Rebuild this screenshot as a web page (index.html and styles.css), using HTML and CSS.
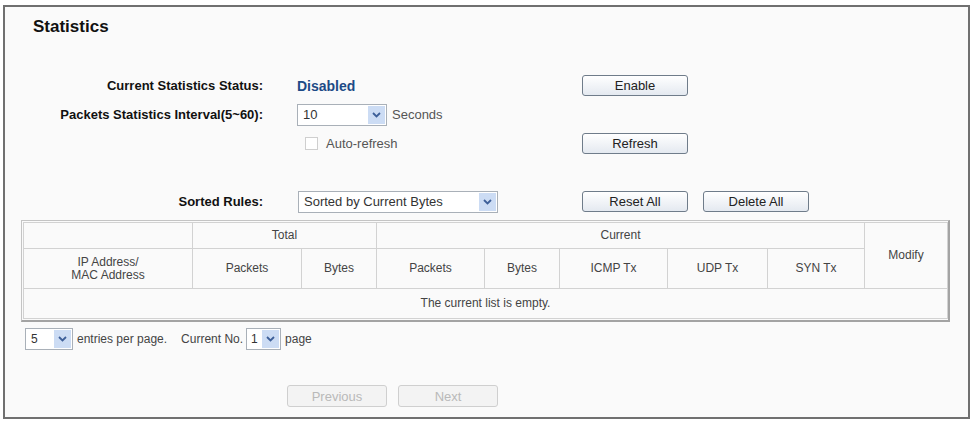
FILE: index.html
```html
<!DOCTYPE html>
<html lang="en">
<head>
  <meta charset="utf-8">
  <title>Statistics</title>
  <link rel="stylesheet" href="styles.css">
</head>
<body>

  <div class="panel">
    <h1 class="title">Statistics</h1>

    <div class="form">
      <div class="label">Current Statistics Status:</div>
      <div class="value"><span class="status">Disabled</span></div>
      <div class="actions"><button class="btn">Enable</button></div>

      <div class="label">Packets Statistics Interval(5~60):</div>
      <div class="value">
        <div class="combo combo-interval">
          <span class="combo-text">10</span>
          <span class="combo-arrow"><svg width="9" height="6" viewBox="0 0 9 6"><path d="M1 1 L4.5 4.5 L8 1" fill="none" stroke="#3d5f99" stroke-width="1.8"/></svg></span>
        </div>
        <span class="unit">Seconds</span>
      </div>
      <div class="actions"></div>

      <div class="label"></div>
      <div class="value">
        <span class="check"></span>
        <span class="unit">Auto-refresh</span>
      </div>
      <div class="actions"><button class="btn">Refresh</button></div>
    </div>

    <div class="form form-rules">
      <div class="label">Sorted Rules:</div>
      <div class="value">
        <div class="combo combo-sort">
          <span class="combo-text">Sorted by Current Bytes</span>
          <span class="combo-arrow"><svg width="9" height="6" viewBox="0 0 9 6"><path d="M1 1 L4.5 4.5 L8 1" fill="none" stroke="#3d5f99" stroke-width="1.8"/></svg></span>
        </div>
      </div>
      <div class="actions">
        <button class="btn">Reset All</button>
        <button class="btn">Delete All</button>
      </div>
    </div>

    <div class="table-wrap">
      <table class="stats">
        <colgroup>
          <col style="width:169px">
          <col style="width:109px">
          <col style="width:75px">
          <col style="width:108px">
          <col style="width:75px">
          <col style="width:108px">
          <col style="width:100px">
          <col style="width:97px">
          <col style="width:83px">
        </colgroup>
        <tr class="head-top">
          <td></td>
          <td colspan="2">Total</td>
          <td colspan="5">Current</td>
          <td rowspan="2">Modify</td>
        </tr>
        <tr class="head-sub">
          <td>IP Address/<br>MAC Address</td>
          <td>Packets</td>
          <td>Bytes</td>
          <td>Packets</td>
          <td>Bytes</td>
          <td>ICMP Tx</td>
          <td>UDP Tx</td>
          <td>SYN Tx</td>
        </tr>
        <tr class="empty-row">
          <td colspan="9">The current list is empty.</td>
        </tr>
      </table>
    </div>

    <div class="pager">
      <div class="combo combo-size">
        <span class="combo-text">5</span>
        <span class="combo-arrow"><svg width="9" height="6" viewBox="0 0 9 6"><path d="M1 1 L4.5 4.5 L8 1" fill="none" stroke="#3d5f99" stroke-width="1.8"/></svg></span>
      </div>
      <span class="pager-text">entries per page.</span>
      <span class="pager-text pager-current">Current No.</span>
      <div class="combo combo-page">
        <span class="combo-text">1</span>
        <span class="combo-arrow"><svg width="9" height="6" viewBox="0 0 9 6"><path d="M1 1 L4.5 4.5 L8 1" fill="none" stroke="#3d5f99" stroke-width="1.8"/></svg></span>
      </div>
      <span class="pager-text">page</span>
    </div>

    <div class="nav">
      <button class="btn btn-nav" disabled>Previous</button>
      <button class="btn btn-nav" disabled>Next</button>
    </div>
  </div>

</body>
</html>
```

FILE: styles.css
```css
* {
  padding: 0;
  margin: 0;
  box-sizing: border-box;
}

body {
  background: #fff;
  font-family: "Liberation Sans", Arial, sans-serif;
  font-size: 13px;
  color: #222;
}

.panel {
  width: 967px;
  height: 414px;
  margin: 5px 0 0 3px;
  border: 2px solid #707070;
  background: #fafafa;
}

.title {
  font-size: 17px;
  font-weight: bold;
  line-height: 20px;
  margin-top: 10px;
  padding-left: 28px;
  color: #111;
}

.form {
  display: grid;
  grid-template-columns: 258px 251px auto;
  grid-auto-rows: 29px;
  column-gap: 34px;
  align-items: center;
  margin-top: 34px;
}

.form-rules {
  margin-top: 29px;
}

.label {
  text-align: right;
  font-weight: bold;
  color: #111;
}

.value {
  display: flex;
  align-items: center;
}

.actions {
  display: flex;
  align-items: center;
  gap: 15px;
}

.status {
  font-weight: bold;
  font-size: 14px;
  color: #1d4a86;
}

.unit {
  margin-left: 5px;
  color: #555;
}

.check {
  width: 13px;
  height: 13px;
  margin: 0 3px 0 8px;
  border: 1px solid #cfcfcf;
  background: #fff;
}

.btn {
  width: 106px;
  height: 21px;
  font-family: inherit;
  font-size: 13px;
  color: #222;
  border: 1px solid #6f7c8a;
  border-radius: 3px;
  background: linear-gradient(#ffffff, #e4e9f0);
}

.btn-nav {
  width: 100px;
  height: 22px;
  color: #b9b9b9;
  border-color: #cfcfcf;
  background: #f3f3f3;
}

.combo {
  display: flex;
  align-items: stretch;
  height: 22px;
  border: 1px solid #a9b0b8;
  background: #fff;
  color: #333;
}

.combo-text {
  flex: 1;
  display: flex;
  align-items: center;
  padding-left: 5px;
  white-space: nowrap;
}

.combo-arrow {
  width: 17px;
  margin: 1px;
  display: flex;
  align-items: center;
  justify-content: center;
  background: #ccdcf4;
}

.combo-interval {
  width: 90px;
}

.combo-sort {
  width: 200px;
  margin-left: 1px;
}

.combo-size {
  width: 48px;
}

.combo-page {
  width: 35px;
}

.combo-page .combo-text {
  padding-left: 4px;
}

.table-wrap {
  width: 929px;
  margin: 4px 0 0 16px;
  padding: 1px;
  border: 1px solid #c4c4c4;
  border-right: 2px solid #a3a3a3;
  border-bottom: 2px solid #a3a3a3;
}

.stats {
  width: 924px;
  table-layout: fixed;
  border-collapse: collapse;
  color: #444;
  font-size: 12px;
}

.stats td {
  border: 1px solid #d2d2d2;
  text-align: center;
  vertical-align: middle;
  line-height: 13px;
}

.head-top {
  height: 26px;
}

.head-sub {
  height: 40px;
}

.empty-row {
  height: 30px;
}

.pager {
  display: flex;
  align-items: center;
  margin-top: 6px;
  padding-left: 20px;
  font-size: 12px;
  color: #444;
}

.pager-text {
  margin: 0 3px 0 4px;
}

.pager-current {
  margin-left: 11px;
}

.nav {
  display: flex;
  gap: 11px;
  margin-top: 35px;
  padding-left: 282px;
}
```
